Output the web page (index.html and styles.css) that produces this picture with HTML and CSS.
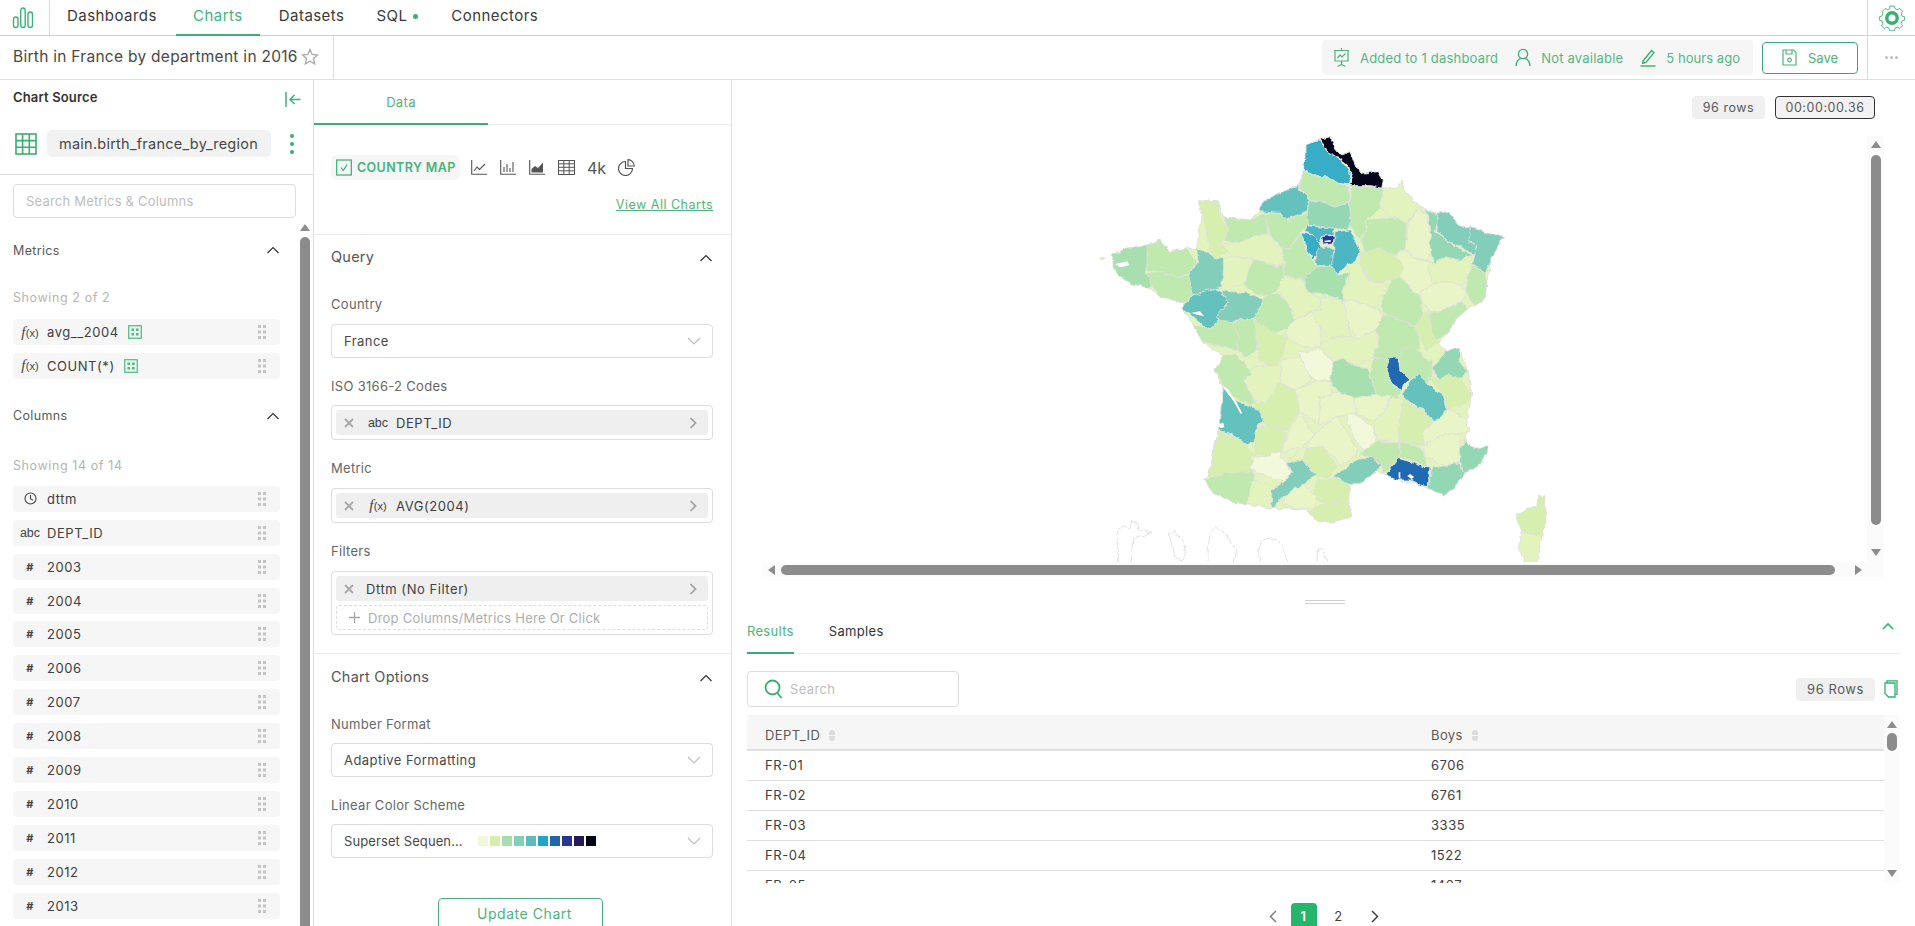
FILE: index.html
```html
<!DOCTYPE html>
<html lang="en">
<head>
<meta charset="utf-8">
<title>Birth in France by department in 2016</title>
<link rel="stylesheet" href="styles.css">
</head>
<body>
<svg class="defs" width="0" height="0" aria-hidden="true">
  <defs>
    <symbol id="grip" viewBox="0 0 10 14"><g fill="#c4c4c4"><rect x="1" y="0" width="3" height="3"/><rect x="6" y="0" width="3" height="3"/><rect x="1" y="5.5" width="3" height="3"/><rect x="6" y="5.5" width="3" height="3"/><rect x="1" y="11" width="3" height="3"/><rect x="6" y="11" width="3" height="3"/></g></symbol>
    <symbol id="up" viewBox="0 0 14 8"><path d="M1.5 7 7 1.5 12.500 7" fill="none" stroke="#333" stroke-width="1.200"/></symbol>
    <symbol id="down" viewBox="0 0 14 8"><path d="M1 1 7 7 13 1" fill="none" stroke="#bdbdbd" stroke-width="1.100"/></symbol>
    <symbol id="right" viewBox="0 0 8 12"><path d="M1.500 1 6.500 6 1.500 11" fill="none" stroke="#a0a0a0" stroke-width="1.700"/></symbol>
    <symbol id="x" viewBox="0 0 10 10"><path d="M1 1 9 9M9 1 1 9" fill="none" stroke="#a8a8a8" stroke-width="1.800"/></symbol>
    <symbol id="calc" viewBox="0 0 14 14"><rect x=".7" y=".7" width="12.600" height="12.600" fill="#e7f5ec" stroke="#53b985" stroke-width="1.200"/><g fill="#53b985"><rect x="3.500" y="3.500" width="2.500" height="2.500"/><rect x="8" y="3.500" width="2.500" height="2.500"/><rect x="3.500" y="8" width="2.500" height="2.500"/><rect x="8" y="8" width="2.500" height="2.500"/></g></symbol>
  </defs>
</svg>

<header class="nav">
  <div class="nav-logo">
    <svg width="22" height="22" viewBox="0 0 22 22"><g fill="none" stroke="#3fb27a" stroke-width="1.400"><rect x="1.500" y="10" width="4.500" height="10.500" rx="2.200"/><rect x="8.700" y="1" width="4.500" height="19.500" rx="2.200"/><rect x="16" y="5" width="4.500" height="15.500" rx="2.200"/></g></svg>
  </div>
  <nav class="nav-items">
    <a class="nav-item nav-dash">Dashboards</a>
    <a class="nav-item nav-charts">Charts</a>
    <a class="nav-item nav-data">Datasets</a>
    <a class="nav-item nav-sql">SQL <i class="nav-dot"></i></a>
    <a class="nav-item nav-conn">Connectors</a>
  </nav>
  <div class="nav-user">
    <svg width="26" height="26" viewBox="0 0 26 26"><path d="M10.500 1.500h5l.8 2.900 2.500 1.100 2.700-1.400 3 3.200-1.500 2.600 1 2.500 2.700.9v3.600l-2.800.9-1 2.500 1.500 2.600-3 3-2.600-1.400-2.500 1-.8 2.900h-5l-.8-2.900-2.500-1-2.600 1.400-3-3 1.400-2.600-1-2.500-2.800-.9v-3.600l2.800-.9 1-2.500L2.600 7.300l3-3.200 2.700 1.400 2.400-1.100z" transform="translate(13 13) scale(.92) translate(-13 -14.500)" fill="none" stroke="#3fb27a" stroke-width="1"/><circle cx="13" cy="13" r="5.200" fill="none" stroke="#37b071" stroke-width="3.400"/></svg>
  </div>
</header>

<section class="titlebar">
  <div class="title-cell">
    <span class="title-text">Birth in France by department in 2016</span>
    <svg width="18" height="18" viewBox="0 0 18 18"><path d="M9 1.500 11.200 6.500 16.500 7 12.500 10.600 13.700 16 9 13.200 4.300 16 5.500 10.600 1.500 7 6.800 6.500z" fill="none" stroke="#a9a9a9" stroke-width="1.300"/></svg>
  </div>
  <div class="title-actions">
    <div class="meta">
      <svg width="17" height="20" viewBox="0 0 17 20"><g fill="none" stroke="#4cb57a" stroke-width="1.200"><path d="M8.500 0v2M1 2.500h15M2 2.500v10.500h13V2.500M8.500 13v4M4.500 18.500l4-2 4 2"/><path d="M4.500 10 7 7l2 2 3.500-3.500"/></g></svg>
      <span class="meta-text meta-a">Added to 1 dashboard</span>
      <svg width="16" height="19" viewBox="0 0 16 19"><g fill="none" stroke="#37b071" stroke-width="1.400"><circle cx="8" cy="6" r="4.600"/><path d="M1 18c.4-4.500 2.800-7 5-7.600M15 18c-.4-4.500-2.800-7-5-7.600"/></g></svg>
      <span class="meta-text meta-b">Not available</span>
      <svg width="16" height="18" viewBox="0 0 16 18"><g fill="none" stroke="#37b071" stroke-width="1.400"><path d="M3 12 11.500 1.500 14 3.700 6 13.500 2.700 14.300z"/><path d="M.5 17h15"/></g></svg>
      <span class="meta-text meta-c">5 hours ago</span>
    </div>
    <button class="btn-save">
      <svg width="15" height="17" viewBox="0 0 15 17"><g fill="none" stroke="#4cb57a" stroke-width="1.200"><path d="M1 1h10.500L14 3.500V16H1z"/><path d="M4 1v4h6V1"/><circle cx="7.500" cy="11" r="1.800"/></g></svg>
      <span>Save</span>
    </button>
    <div class="more"><i></i><i></i><i></i></div>
  </div>
</section>

<main class="workspace">
  <aside class="source">
    <div class="source-head">
      <span class="source-title">Chart Source</span>
      <svg width="16" height="15" viewBox="0 0 16 15"><g fill="none" stroke="#3fb27a" stroke-width="1.500"><path d="M1 0v15M15.500 7.500H5M9.500 3 5 7.500l4.500 4.500"/></g></svg>
    </div>
    <div class="dataset">
      <svg class="dataset-icon" width="22" height="22" viewBox="0 0 22 22"><g fill="none" stroke="#37b071" stroke-width="1.600"><rect x="1" y="1" width="20" height="20"/><path d="M7.600 1v20M14.300 1v20M1 7.600h20M1 14.300h20"/></g></svg>
      <span class="dataset-name">main.birth_france_by_region</span>
      <span class="kebab"><i></i><i></i><i></i></span>
    </div>
    <div class="source-search"><span class="source-input">Search Metrics &amp; Columns</span></div>
    <div class="source-body">
      <div class="source-list">
        <div class="sec-head sec-metrics"><span>Metrics</span><svg width="14" height="8"><use href="#up"/></svg></div>
        <div class="showing showing-m">Showing 2 of 2</div>
        <div class="field"><span class="ftype"><em>f</em><small>(x)</small></span><span class="fname">avg__2004</span><svg class="calc" width="14" height="14"><use href="#calc"/></svg><svg class="grip" width="10" height="14"><use href="#grip"/></svg></div>
        <div class="field"><span class="ftype"><em>f</em><small>(x)</small></span><span class="fname">COUNT(*)</span><svg class="calc" width="14" height="14"><use href="#calc"/></svg><svg class="grip" width="10" height="14"><use href="#grip"/></svg></div>
        <div class="sec-head sec-cols"><span>Columns</span><svg width="14" height="8"><use href="#up"/></svg></div>
        <div class="showing showing-c">Showing 14 of 14</div>
        <div class="field"><span class="ftype"><svg width="13" height="13" viewBox="0 0 13 13"><g fill="none" stroke="#444" stroke-width="1.100"><circle cx="6.500" cy="6.500" r="5.500"/><path d="M6.500 3v3.700l2.400 1.500"/></g></svg></span><span class="fname">dttm</span><svg class="grip" width="10" height="14"><use href="#grip"/></svg></div>
        <div class="field"><span class="ftype ftype-s">abc</span><span class="fname">DEPT_ID</span><svg class="grip" width="10" height="14"><use href="#grip"/></svg></div>
        <div class="field"><span class="ftype ftype-h">#</span><span class="fname">2003</span><svg class="grip" width="10" height="14"><use href="#grip"/></svg></div>
        <div class="field"><span class="ftype ftype-h">#</span><span class="fname">2004</span><svg class="grip" width="10" height="14"><use href="#grip"/></svg></div>
        <div class="field"><span class="ftype ftype-h">#</span><span class="fname">2005</span><svg class="grip" width="10" height="14"><use href="#grip"/></svg></div>
        <div class="field"><span class="ftype ftype-h">#</span><span class="fname">2006</span><svg class="grip" width="10" height="14"><use href="#grip"/></svg></div>
        <div class="field"><span class="ftype ftype-h">#</span><span class="fname">2007</span><svg class="grip" width="10" height="14"><use href="#grip"/></svg></div>
        <div class="field"><span class="ftype ftype-h">#</span><span class="fname">2008</span><svg class="grip" width="10" height="14"><use href="#grip"/></svg></div>
        <div class="field"><span class="ftype ftype-h">#</span><span class="fname">2009</span><svg class="grip" width="10" height="14"><use href="#grip"/></svg></div>
        <div class="field"><span class="ftype ftype-h">#</span><span class="fname">2010</span><svg class="grip" width="10" height="14"><use href="#grip"/></svg></div>
        <div class="field"><span class="ftype ftype-h">#</span><span class="fname">2011</span><svg class="grip" width="10" height="14"><use href="#grip"/></svg></div>
        <div class="field"><span class="ftype ftype-h">#</span><span class="fname">2012</span><svg class="grip" width="10" height="14"><use href="#grip"/></svg></div>
        <div class="field"><span class="ftype ftype-h">#</span><span class="fname">2013</span><svg class="grip" width="10" height="14"><use href="#grip"/></svg></div>
      </div>
      <div class="vbar vbar-source"><i class="arr-up"></i><b class="thumb"></b></div>
    </div>
  </aside>

  <section class="controls">
    <div class="ctl-tabs"><span class="ctl-tab">Data</span></div>
    <div class="types">
      <div class="type-row">
        <span class="type-chip">
          <svg width="16" height="17" viewBox="0 0 16 17"><g fill="none" stroke="#37b071" stroke-width="1.200"><rect x=".7" y="1" width="14.600" height="15"/><path d="M5 8.500l2.300 3L11 5.500"/></g></svg>
          <span>COUNTRY MAP</span>
        </span>
        <svg class="type-ic" width="16" height="15" viewBox="0 0 16 15"><g fill="none" stroke="#555" stroke-width="1.100"><path d="M.7 0v14.300H16"/><path d="M3 11l3-4 2.500 2.500L14 4"/></g></svg>
        <svg class="type-ic" width="16" height="15" viewBox="0 0 16 15"><g fill="none" stroke="#555" stroke-width="1.100"><path d="M.7 0v14.300H16M4 12V7M7 12V4M10 12V8M13 12V2"/></g></svg>
        <svg class="type-ic" width="16" height="15" viewBox="0 0 16 15"><path d="M.7 0v14.300H16" fill="none" stroke="#555" stroke-width="1.100"/><path d="M2.500 12.500V9l3.500-3 3 2 5-5.500v10z" fill="#555"/></svg>
        <svg class="type-ic" width="17" height="15" viewBox="0 0 17 15"><g fill="none" stroke="#555" stroke-width="1"><rect x=".5" y=".5" width="16" height="14"/><path d="M.5 3.800h16M.5 7.300h16M.5 10.800h16M5.800.5v14M11.200.5v14"/></g></svg>
        <span class="type-4k">4k</span>
        <svg class="type-ic type-pie" width="17" height="17" viewBox="0 0 17 17"><g fill="none" stroke="#555" stroke-width="1.200"><path d="M7.500 2.500a7 7 0 1 0 7 7h-7z"/><path d="M10 .7a6.500 6.500 0 0 1 6.300 6.300H10z"/></g></svg>
      </div>
      <a class="view-all">View All Charts</a>
    </div>
    <div class="panel-sec sec-query">
      <div class="panel-head"><span>Query</span><svg width="14" height="8"><use href="#up"/></svg></div>
      <label class="ctl-label lb-country">Country</label>
      <div class="select"><span>France</span><svg width="14" height="8"><use href="#down"/></svg></div>
      <label class="ctl-label lb-iso">ISO 3166-2 Codes</label>
      <div class="dropbox">
        <div class="chip"><svg class="chip-x" width="10" height="10"><use href="#x"/></svg><span class="chip-t ftype-s">abc</span><span class="chip-n">DEPT_ID</span><svg class="chip-go" width="8" height="12"><use href="#right"/></svg></div>
      </div>
      <label class="ctl-label lb-metric">Metric</label>
      <div class="dropbox">
        <div class="chip"><svg class="chip-x" width="10" height="10"><use href="#x"/></svg><span class="chip-t"><em>f</em><small>(x)</small></span><span class="chip-n">AVG(2004)</span><svg class="chip-go" width="8" height="12"><use href="#right"/></svg></div>
      </div>
      <label class="ctl-label lb-filter">Filters</label>
      <div class="dropbox">
        <div class="chip chip-f"><svg class="chip-x" width="10" height="10"><use href="#x"/></svg><span class="chip-n">Dttm (No Filter)</span><svg class="chip-go" width="8" height="12"><use href="#right"/></svg></div>
        <div class="drop-hint"><svg width="11" height="11" viewBox="0 0 11 11"><path d="M5.500 0v11M0 5.500h11" stroke="#a8a8a8" stroke-width="1.300"/></svg><span>Drop Columns/Metrics Here Or Click</span></div>
      </div>
    </div>
    <div class="panel-sec sec-options">
      <div class="panel-head"><span>Chart Options</span><svg width="14" height="8"><use href="#up"/></svg></div>
      <label class="ctl-label lb-number">Number Format</label>
      <div class="select"><span>Adaptive Formatting</span><svg width="14" height="8"><use href="#down"/></svg></div>
      <label class="ctl-label lb-scheme">Linear Color Scheme</label>
      <div class="select">
        <span class="scheme-name">Superset Sequen...</span>
        <span class="swatches"><i class="s1"></i><i class="s2"></i><i class="s3"></i><i class="s4"></i><i class="s5"></i><i class="s6"></i><i class="s7"></i><i class="s8"></i><i class="s9"></i><i class="s10"></i></span>
        <svg width="14" height="8"><use href="#down"/></svg>
      </div>
    </div>
    <div class="update-row"><button class="btn-update">Update Chart</button></div>
  </section>

  <section class="viz">
    <div class="viz-badges"><span class="badge badge-count">96 rows</span><span class="badge badge-timer">00:00:00.36</span></div>
    <div class="map-frame">
      <div class="map-cell">
        <svg class="map" width="470" height="426" viewBox="0 48 1410 1278">
          <defs>
            <filter id="rough" x="-3%" y="-3%" width="106%" height="106%" color-interpolation-filters="sRGB">
              <feTurbulence type="fractalNoise" baseFrequency="0.05" numOctaves="3" seed="4" result="f"/>
              <feColorMatrix in="f" type="matrix" values="1 0 0 0 0  0 1 0 0 0  0 0 0 0 0  0 0 0 0 1" result="opaque"/>
              <feDisplacementMap in="SourceGraphic" in2="opaque" scale="14" xChannelSelector="R" yChannelSelector="G"/>
            </filter>
          </defs>
          <g class="dom" filter="url(#rough)">
            <path d="M83 1326v-93l20-15 15 12 8-30 14 6 4 22 40 10-20 12-14-2-22 10-5 78M237 1240l15-5 25 22 12 48-10 15-28-8-6-40zM355 1330c-3-60 2-90 20-110l30 20 35 50-8 40M510 1330c-8-40-5-70 25-75 30-5 55 30 55 75M680 1330l4-45 14 2 15 43"/>
          </g>
          <g class="fr" filter="url(#rough)">
            <polygon class="y1" points="645,75 690,58 722,50 735,85 752,105 780,95 795,135 810,160 865,155 880,205 920,205 932,180 945,215 985,255 1040,280 1075,275 1110,320 1140,320 1190,340 1240,348 1205,415 1190,490 1185,535 1155,557 1135,565 1095,600 1075,640 1045,665 1065,695 1105,685 1135,755 1145,825 1130,900 1135,930 1125,960 1150,985 1195,980 1170,1035 1125,1060 1090,1105 1060,1125 1015,1105 990,1095 920,1080 885,1065 860,1055 810,1090 780,1090 775,1135 785,1190 730,1205 680,1205 655,1175 620,1165 545,1165 470,1150 440,1150 370,1120 340,1080 355,1070 370,1000 385,930 390,890 400,805 375,750 400,705 340,670 310,615 275,565 285,550 215,530 180,505 120,490 90,470 70,440 68,405 172,375 210,360 240,395 290,385 320,385 335,275 322,243 385,242 400,292 480,300 510,275 515,250 560,222 625,197 640,150 645,110"/>
            <polygon class="t3" points="625,197 655,240 652,272 620,286 590,300 570,280 510,275 515,250 560,222"/>
            <polygon class="g2" points="640,152 680,170 715,172 745,190 775,197 778,243 735,260 700,245 655,240 628,195"/>
            <polygon class="t1" points="645,75 688,60 705,85 718,102 745,113 772,140 785,170 775,195 745,190 715,170 680,170 640,150 645,110"/>
            <polygon class="bk" points="690,58 722,50 735,85 752,105 780,95 795,135 810,160 865,155 880,180 875,205 840,197 782,197 790,170 775,145 770,130 745,112 715,100 705,80"/>
            <polygon class="g2" points="785,198 880,205 870,262 830,300 825,340 805,360 772,300 780,250"/>
            <polygon class="y1" points="880,205 920,205 932,180 945,215 985,255 955,305 905,290 870,262"/>
            <polygon class="m2" points="655,242 700,247 735,262 778,245 782,300 775,330 730,325 680,318 650,315"/>
            <polygon class="g2" points="570,282 590,302 620,287 652,278 655,315 630,335 605,380 575,385 540,340 525,280"/>
            <polygon class="g2" points="400,292 480,300 525,282 535,340 490,350 455,365 420,370 400,360 415,325"/>
            <polygon class="g3" points="322,243 385,242 385,265 395,300 418,325 405,345 395,370 425,385 380,415 360,400 352,330 335,275"/>
            <polygon class="y1" points="395,372 455,365 490,350 540,345 575,385 580,425 560,440 490,415 440,410 420,405"/>
            <polygon class="t2" points="735,335 780,330 812,395 795,425 755,450 745,462 720,450 730,400"/>
            <polygon class="t2" points="650,317 730,325 733,342 695,350 690,375 670,345 640,335"/>
            <polygon class="t1" points="632,338 670,345 695,378 668,418 650,385"/>
            <polygon class="t3" points="690,380 730,385 728,435 680,437 675,410"/>
            <polygon class="nv" points="695,350 733,345 730,372 700,375"/>
            <polygon class="g2" points="830,300 905,292 950,310 945,385 915,405 870,385 830,395 810,362 828,340"/>
            <polygon class="y2" points="985,260 1010,290 1020,330 1025,380 1015,420 980,415 945,385 955,310"/>
            <polygon class="m2" points="1000,270 1035,280 1045,300 1035,335 1080,368 1125,395 1145,405 1110,420 1065,410 1030,428 1020,385 1022,325 1015,290"/>
            <polygon class="m1" points="1040,280 1075,275 1110,320 1140,320 1145,345 1135,365 1160,375 1155,405 1120,385 1080,365 1040,335 1045,300"/>
            <polygon class="m1" points="1140,320 1160,325 1190,340 1240,348 1215,400 1205,415 1185,460 1147,430 1155,405 1160,375 1135,362 1140,345"/>
            <polygon class="g2" points="1147,435 1185,460 1190,490 1185,535 1155,557 1140,540 1125,505 1130,480"/>
            <polygon class="y1" points="1000,420 1030,430 1065,412 1110,422 1145,410 1147,432 1130,478 1115,498 1080,485 1025,487 1015,450"/>
            <polygon class="g3" points="810,398 830,395 870,385 915,405 940,440 930,470 880,485 855,490 830,470 812,430"/>
            <polygon class="y2" points="915,405 945,388 980,418 1015,425 1015,450 1030,490 990,515 990,530 950,490 930,470 940,440"/>
            <polygon class="y2" points="1030,490 1080,485 1115,500 1130,520 1115,545 1050,575 1020,578 990,530 990,515"/>
            <polygon class="g2" points="1020,580 1050,575 1115,545 1135,565 1095,600 1075,640 1040,660 1025,640 1020,610"/>
            <polygon class="g2" points="870,555 905,480 930,472 950,492 990,535 1000,578 975,620 905,590 880,580"/>
            <polygon class="g3" points="1000,578 1020,580 1025,640 1045,665 1010,690 985,645 975,620"/>
            <polygon class="y1" points="755,515 780,480 770,435 795,425 812,435 830,475 855,490 880,488 890,510 870,555 850,560 790,540 760,540"/>
            <polygon class="y2" points="760,545 790,542 850,562 880,582 860,630 800,655 775,620"/>
            <polygon class="g1" points="640,478 680,440 722,438 745,465 780,460 755,515 760,540 690,520 650,515"/>
            <polygon class="g2" points="605,382 632,340 650,390 668,420 680,440 640,478 580,468 585,425 575,385"/>
            <polygon class="g2" points="490,418 560,442 580,430 580,470 560,510 535,530 490,520 462,490 480,440"/>
            <polygon class="y1" points="400,415 440,410 490,416 478,445 462,490 415,510 390,505 400,450"/>
            <polygon class="m1" points="320,385 360,402 380,418 400,415 400,450 395,500 310,525 295,465 325,425"/>
            <polygon class="g2" points="172,375 210,360 240,395 290,385 320,425 295,460 260,470 210,455 170,450"/>
            <polygon class="g1" points="68,405 110,385 145,378 172,375 170,455 185,490 180,505 120,490 90,470 70,440"/>
            <polygon class="g2" points="165,458 210,455 260,470 295,465 310,525 285,550 215,530 190,505 180,480"/>
            <polygon class="t3" points="310,525 370,505 395,515 410,545 400,570 385,600 360,630 345,620 300,580 275,565"/>
            <polygon class="m1" points="395,513 465,518 518,535 505,575 490,595 440,600 395,610 382,590 412,550"/>
            <polygon class="g2" points="518,535 560,520 590,545 615,600 590,625 555,640 520,620 490,595 505,575"/>
            <polygon class="y1" points="560,510 580,470 640,480 650,515 690,530 695,560 660,575 615,600 590,545"/>
            <polygon class="y1" points="690,530 760,540 775,620 780,650 715,655 690,620 660,580 695,570"/>
            <polygon class="y2" points="615,600 660,578 690,620 695,680 640,680 590,655 590,625"/>
            <polygon class="g3" points="490,595 520,620 555,640 590,655 580,700 555,745 510,720 500,660"/>
            <polygon class="g2" points="425,605 490,595 500,650 500,690 470,710 440,690 445,650"/>
            <polygon class="g2" points="310,615 345,622 360,632 385,600 425,605 445,650 440,690 395,680 340,670"/>
            <polygon class="y3" points="628,698 690,688 730,725 722,782 680,782 640,750"/>
            <polygon class="y1" points="715,655 780,650 800,655 860,630 870,680 855,690 850,715 790,735 760,715 730,725 690,680"/>
            <polygon class="g2" points="860,630 880,585 905,592 975,622 985,645 990,690 925,715 895,715 850,715 855,690 870,680"/>
            <polygon class="g2" points="850,715 895,715 890,750 905,790 935,810 915,840 860,825 840,760"/>
            <polygon class="g1" points="730,725 760,715 790,735 835,750 860,825 790,835 745,815 722,782"/>
            <polygon class="b1" points="898,712 925,715 930,750 960,780 940,795 935,810 905,790 888,750"/>
            <polygon class="g2" points="940,685 975,682 1010,720 1030,720 1025,770 1015,790 985,765 960,780 930,750 930,715"/>
            <polygon class="m2" points="1065,695 1105,685 1115,735 1135,755 1110,775 1075,765 1045,780 1030,745"/>
            <polygon class="g3" points="1045,780 1075,765 1110,775 1145,825 1130,850 1075,865 1060,825 1015,770"/>
            <polygon class="t3" points="985,765 1015,790 1040,815 1060,825 1075,885 1030,910 1000,865 970,855 935,825 960,785"/>
            <polygon class="y2" points="575,720 630,710 665,780 620,810 570,790"/>
            <polygon class="y1" points="460,780 490,740 575,735 570,790 530,850 490,840"/>
            <polygon class="g2" points="400,705 440,705 485,760 460,780 495,845 480,855 430,830 405,800 375,750"/>
            <polygon class="g3" points="530,850 565,790 620,810 630,870 590,930 530,915 520,900 490,850"/>
            <polygon class="t3" points="400,805 435,840 470,855 500,865 520,900 500,920 490,970 465,970 420,940 385,930 390,890"/>
            <polygon class="g3" points="385,935 420,943 465,973 495,1005 480,1015 490,1055 400,1060 355,1070 370,1000"/>
            <polygon class="g3" points="500,925 530,915 590,935 575,990 570,1005 495,1005 490,965"/>
            <polygon class="y3" points="490,1015 570,995 605,1060 590,1085 545,1075 480,1045"/>
            <polygon class="g2" points="340,1080 400,1060 490,1055 490,1090 470,1150 440,1150 370,1120"/>
            <polygon class="y1" points="490,1080 545,1095 555,1130 545,1165 490,1155 470,1150"/>
            <polygon class="y2" points="615,810 680,782 722,785 725,825 690,830 690,910 630,875 620,830"/>
            <polygon class="y2" points="690,830 725,825 745,815 790,835 800,875 770,885 740,890 690,915"/>
            <polygon class="y2" points="595,935 630,880 670,945 640,980 590,1015 575,990"/>
            <polygon class="y1" points="575,995 640,980 590,1028 570,1010"/>
            <polygon class="y2" points="670,945 740,890 800,980 800,1005 755,1035 720,1000 700,980 650,985"/>
            <polygon class="g3" points="650,985 700,980 740,1040 720,1075 680,1065 640,1020"/>
            <polygon class="m1" points="590,1030 635,1018 680,1065 640,1090 590,1125 555,1150 555,1165 545,1165 545,1110 590,1080 605,1055"/>
            <polygon class="y3" points="770,885 800,885 850,920 860,980 820,990 790,950"/>
            <polygon class="y2" points="790,835 860,825 900,830 880,880 850,905 800,880"/>
            <polygon class="y1" points="905,830 940,835 925,965 860,960 850,905 880,880"/>
            <polygon class="g3" points="940,835 970,860 1000,870 1030,910 1000,930 1000,975 930,970 925,940"/>
            <polygon class="y2" points="1075,865 1130,900 1135,930 1110,940 1050,945 1005,975 995,940 1030,910"/>
            <polygon class="y2" points="1050,945 1110,945 1110,980 1120,1025 1060,1035 1010,1010 1000,980"/>
            <polygon class="m2" points="1125,960 1150,985 1195,980 1170,1035 1125,1060 1108,1025 1112,985"/>
            <polygon class="g2" points="930,970 990,980 1005,1005 1010,1040 960,1020 930,1010"/>
            <polygon class="m2" points="1025,1045 1105,1030 1125,1060 1090,1105 1060,1125 1015,1105"/>
            <polygon class="b1" points="885,1065 925,1015 960,1025 1000,1040 1020,1040 1015,1100 990,1095 960,1080 920,1080"/>
            <polygon class="g2" points="860,965 925,965 930,1010 880,1060 875,1035 845,1010 810,1005"/>
            <polygon class="m1" points="735,1065 760,1050 800,1020 845,1010 875,1035 860,1055 810,1090 780,1090 740,1090"/>
            <polygon class="g3" points="680,1080 740,1075 780,1090 775,1135 700,1150 670,1130"/>
            <polygon class="y2" points="590,1125 640,1090 680,1130 675,1165 620,1165 575,1150"/>
            <polygon class="g3" points="655,1175 705,1150 775,1140 785,1190 730,1205 680,1205"/>
            <polygon class="g3" points="1345,1125 1362,1130 1368,1210 1355,1250 1295,1235 1275,1185 1315,1165 1340,1160"/>
            <polygon class="y1" points="1292,1235 1355,1250 1340,1340 1310,1340 1285,1285"/>
            <polygon class="y1" points="30,412 44,410 42,418 32,418"/>
          </g>
          <g class="water">
            <polygon points="75,432 112,424 118,436 90,442"/>
            <polygon points="304,578 330,574 342,588 320,584"/>
            <polygon points="403,805 408,802 437,842 456,878 452,882 432,846"/>
            <polygon points="388,912 400,908 403,922 390,925"/>
            <polygon points="952,1068 960,1062 972,1070 965,1078"/>
            <polygon points="926,1057 931,1057 931,1076 926,1074"/>
            <polygon points="703,362 722,360 722,365 705,367"/>
          </g>
        </svg>
      </div>
      <div class="vbar vbar-map"><i class="arr-up"></i><b class="thumb"></b><i class="arr-down"></i></div>
      <div class="hbar"><i class="arr-left"></i><b class="thumb"></b><i class="arr-right"></i></div>
    </div>
    <div class="splitter"></div>
    <div class="res-tabs">
      <span class="res-tab res-active">Results</span>
      <span class="res-tab res-samples">Samples</span>
      <svg class="res-caret" width="14" height="8" viewBox="0 0 14 8"><path d="M2 7 7 2l5 5" fill="none" stroke="#37b071" stroke-width="1.600"/></svg>
    </div>
    <div class="res-tools">
      <div class="res-search">
        <svg width="19" height="20" viewBox="0 0 19 20"><g fill="none" stroke="#37b071" stroke-width="1.800"><circle cx="8.500" cy="8.500" r="7"/><path d="M13.500 14l4 5"/></g></svg>
        <span>Search</span>
      </div>
      <span class="badge badge-rows">96 Rows</span>
      <svg class="copy-ic" width="14" height="18" viewBox="0 0 14 18"><g fill="none" stroke="#37b071" stroke-width="1.300"><path d="M3 3V.8h10v13.500h-2"/><path d="M1 3h10v14H4.500L1 13.500z"/></g></svg>
    </div>
    <div class="res-table">
      <div class="table-clip">
        <table>
          <thead>
            <tr><th class="col-a">DEPT_ID <i class="sort"></i></th><th>Boys <i class="sort"></i></th></tr>
          </thead>
          <tbody>
            <tr><td>FR-01</td><td>6706</td></tr>
            <tr><td>FR-02</td><td>6761</td></tr>
            <tr><td>FR-03</td><td>3335</td></tr>
            <tr><td>FR-04</td><td>1522</td></tr>
            <tr><td>FR-05</td><td>1407</td></tr>
          </tbody>
        </table>
      </div>
      <div class="vbar vbar-table"><i class="arr-up"></i><b class="thumb"></b><i class="arr-down"></i></div>
    </div>
    <div class="pager">
      <svg width="8" height="13" viewBox="0 0 8 13"><path d="M7 1 1.500 6.500 7 12" fill="none" stroke="#777" stroke-width="1.400"/></svg>
      <span class="page page-on">1</span>
      <span class="page page-two">2</span>
      <svg width="8" height="13" viewBox="0 0 8 13"><path d="M1 1l5.500 5.500L1 12" fill="none" stroke="#333" stroke-width="1.400"/></svg>
    </div>
  </section>
</main>
</body>
</html>
```

FILE: styles.css
```css
* { box-sizing: border-box; }
html, body { margin: 0; padding: 0; height: 926px; overflow: hidden; background: #fff; }
body { font-family: "Inter", "Liberation Sans", sans-serif; color: #484848; font-size: 13px; letter-spacing: .35px; }
.defs { display: block; height: 0; }
svg { flex: none; display: block; }
em { font-family: "Liberation Serif", serif; font-style: italic; font-size: 15px; }
small { font-family: "Liberation Sans", sans-serif; font-size: 11px; letter-spacing: 0; }

/* top nav */
.nav { display: flex; height: 36px; border-bottom: 1px solid #d2d2d2; }
.nav-logo { width: 50px; border-right: 1px solid #d9d9d9; display: flex; align-items: center; padding-left: 12px; }
.nav-items { display: flex; flex: 1; }
.nav-item { display: flex; align-items: center; height: 36px; padding-bottom: 4px; font-size: 15px; letter-spacing: .45px; color: #3a3a3a; gap: 6px; border-bottom: 2px solid transparent; }
.nav-dash { margin-left: 17px; }
.nav-charts { margin-left: 19px; width: 84px; justify-content: center; color: #44b37a; border-bottom-color: #37b071; }
.nav-data { margin-left: 19px; }
.nav-sql { margin-left: 32px; }
.nav-conn { margin-left: 33px; }
.nav-dot { width: 5px; height: 5px; margin-top: 2px; border-radius: 50%; background: #37b071; }
.nav-user { width: 48px; border-left: 1px solid #d9d9d9; display: flex; align-items: center; justify-content: center; }

/* title bar */
.titlebar { display: flex; height: 44px; border-bottom: 1px solid #dedede; }
.title-cell { width: 334px; border-right: 1px solid #dedede; display: flex; align-items: center; padding-left: 13px; gap: 3px; padding-bottom: 2px; }
.title-text { font-size: 15.500px; letter-spacing: .28px; color: #484848; white-space: nowrap; }
.title-actions { flex: 1; display: flex; justify-content: flex-end; align-items: center; }
.meta { display: flex; align-items: center; height: 35px; width: 431px; background: #f6f6f6; border-radius: 4px; padding-left: 11px; color: #4cb57a; }
.meta-text { font-size: 13px; letter-spacing: .2px; margin-left: 10px; white-space: nowrap; color: #55b883; }
.meta-a { margin-right: 17px; }
.meta-b { margin-right: 17px; }
.meta-c { letter-spacing: .05px; }
.btn-save { display: flex; align-items: center; justify-content: center; gap: 11px; width: 96px; height: 32px; margin-left: 9px; background: #fff; border: 1px solid #37a877; border-radius: 4px; color: #4cb57a; font: inherit; font-size: 13px; padding: 0; }
.more { width: 48px; height: 43px; margin-left: 9px; border-left: 1px solid #d9d9d9; display: flex; justify-content: center; align-items: center; gap: 2px; }
.more i { width: 3px; height: 3px; border-radius: 50%; background: #bdbdbd; }

/* layout */
.workspace { display: flex; height: 846px; }

/* source panel */
.source { width: 314px; border-right: 1px solid #e0e0e0; display: flex; flex-direction: column; flex: none; }
.source-head { display: flex; justify-content: space-between; padding: 9px 12px 0 13px; height: 50px; }
.source-title { font-size: 13px; letter-spacing: .15px; font-weight: 600; color: #333; }
.source-head svg { margin-top: 3px; }
.dataset { display: flex; align-items: center; height: 45px; border-bottom: 1px solid #dedede; padding-bottom: 17px; padding-left: 15px; }
.dataset-name { background: #f2f2f2; border-radius: 5px; width: 224px; height: 27px; margin-left: 10px; display: flex; align-items: center; padding-left: 12px; font-size: 14.500px; letter-spacing: .24px; white-space: nowrap; }
.kebab { margin-left: 19px; display: flex; flex-direction: column; gap: 4px; }
.kebab i { width: 4px; height: 4px; background: #37b071; border-radius: 50%; }
.source-search { padding: 9px 0 0 13px; height: 44px; }
.source-input { display: flex; align-items: center; width: 283px; height: 34px; padding-left: 12px; border: 1px solid #dcdcdc; border-radius: 4px; font-size: 13px; letter-spacing: .2px; color: #bdbdbd; }
.source-body { display: flex; flex: 1; overflow: hidden; }
.source-list { width: 300px; padding-left: 13px; flex: none; }
.sec-head { display: flex; align-items: center; justify-content: space-between; width: 267px; font-size: 12.500px; color: #5a5a5a; height: 20px; }
.sec-metrics { margin-top: 21px; }
.showing { font-size: 12.500px; color: #b5b5b5; height: 20px; display: flex; align-items: center; letter-spacing: .6px; }
.showing-m { margin-top: 27px; margin-bottom: 12px; }
.showing-c { margin-top: 30px; margin-bottom: 10px; }
.sec-cols { margin-top: 27px; }
.field { display: flex; align-items: center; width: 267px; height: 26px; margin-bottom: 7.900px; background: #f6f6f6; border-radius: 4px; font-size: 13px; color: #404040; }
.ftype { width: 34px; flex: none; display: flex; align-items: baseline; justify-content: center; color: #444; }
.ftype svg { align-self: center; }
.ftype-s { font-family: "Liberation Sans", sans-serif; font-size: 12.500px; letter-spacing: 0; }
.ftype-h { font-weight: 700; font-size: 11px; }
.fname { letter-spacing: .55px; white-space: nowrap; }
.calc { margin-left: 9px; }
.grip { margin-left: auto; margin-right: 13px; }

/* scrollbars */
.vbar { position: relative; display: flex; flex-direction: column; align-items: center; flex: none; }
.vbar .thumb { display: block; width: 10px; background: #8c8c8c; border-radius: 5px; }
.arr-up, .arr-down, .arr-left, .arr-right { display: block; width: 0; height: 0; flex: none; border-style: solid; border-color: transparent; }
.arr-up { border-width: 0 5px 7px; border-bottom-color: #8c8c8c; }
.arr-down { border-width: 7px 5px 0; border-top-color: #8c8c8c; }
.arr-left { border-width: 5px 7px 5px 0; border-right-color: #8c8c8c; }
.arr-right { border-width: 5px 0 5px 7px; border-left-color: #8c8c8c; }
.vbar-source { width: 10px; margin-right: 3px; padding-top: 5px; }
.vbar-source .thumb { flex: 1; margin-top: 6px; border-radius: 5px 5px 0 0; }

/* controls panel */
.controls { width: 418px; flex: none; border-right: 1px solid #e0e0e0; }
.ctl-tabs { height: 45px; border-bottom: 1px solid #ececec; }
.ctl-tab { display: flex; align-items: center; justify-content: center; width: 174px; height: 45px; border-bottom: 2px solid #3fa873; color: #4fb47f; font-size: 13px; }
.types { height: 110px; border-bottom: 1px solid #ececec; padding: 30px 18px 0 17px; }
.type-row { display: flex; align-items: center; height: 25px; }
.type-chip { display: flex; align-items: center; width: 129px; height: 25px; background: #f6f6f6; border-radius: 6px; padding-left: 5px; gap: 5px; color: #45b47a; font-size: 12.500px; font-weight: 600; letter-spacing: .4px; white-space: nowrap; }
.type-ic { margin-left: 13px; }
.type-chip + .type-ic { margin-left: 11px; }
.type-pie { margin-left: 12px; }
.type-4k { margin-left: 12px; font-size: 16px; color: #555; letter-spacing: 0; }
.view-all { display: block; text-align: right; margin-top: 17px; color: #4cb57a; text-decoration: underline; font-size: 12.500px; letter-spacing: .5px; }
.panel-sec { padding: 0 18px 0 17px; border-bottom: 1px solid #ececec; }
.panel-head { display: flex; justify-content: space-between; align-items: center; font-size: 14.500px; color: #555; letter-spacing: .25px; height: 22px; }
.panel-head svg { margin-top: 3px; }
.sec-query { height: 419px; padding-top: 10px; }
.sec-options { height: 244px; padding-top: 11px; border-bottom: 0; }
.ctl-label { display: block; height: 18px; line-height: 18px; font-size: 13px; color: #666; letter-spacing: .3px; }
.lb-country { margin-top: 28px; margin-bottom: 11px; }
.lb-iso { margin-top: 19px; margin-bottom: 10px; }
.lb-metric { margin-top: 19px; margin-bottom: 11px; }
.lb-filter { margin-top: 19px; margin-bottom: 11px; }
.lb-number { margin-top: 28px; margin-bottom: 10px; }
.lb-scheme { margin-top: 19px; margin-bottom: 10px; }
.select { display: flex; align-items: center; height: 34px; border: 1px solid #dcdcdc; border-radius: 4px; padding: 0 11px 1px 12px; font-size: 13px; color: #484848; letter-spacing: .45px; }
.select > svg { margin-left: auto; margin-top: 1px; }
.scheme-name { width: 122px; flex: none; letter-spacing: .1px; white-space: nowrap; }
.swatches { display: flex; gap: 2px; margin-left: 12px; }
.swatches i { width: 10px; height: 10px; display: block; }
.s1 { background: #f1f8d6; } .s2 { background: #d7eeac; } .s3 { background: #a8deaf; } .s4 { background: #84cebb; } .s5 { background: #5cbdbc; }
.s6 { background: #1fa6c8; } .s7 { background: #2165ab; } .s8 { background: #283593; } .s9 { background: #241a5c; } .s10 { background: #050518; }
.dropbox { border: 1px solid #dcdcdc; border-radius: 4px; padding: 4px; }
.chip { display: flex; align-items: center; height: 25px; background: #efefef; border-radius: 3px; padding: 0 11px 0 8px; font-size: 13px; color: #404040; }
.chip-t { width: 36px; margin-left: 6px; text-align: center; flex: none; }
.chip-n { letter-spacing: .55px; white-space: nowrap; }
.chip-f .chip-n { margin-left: 12px; }
.chip-go { margin-left: auto; }
.drop-hint { display: flex; align-items: center; height: 25px; margin-top: 4px; border: 1px dashed #dcdcdc; border-radius: 3px; padding-left: 12px; gap: 8px; color: #adadad; font-size: 13px; letter-spacing: .25px; white-space: nowrap; }
.update-row { display: flex; justify-content: center; }
.btn-update { width: 165px; height: 40px; background: #fff; border: 1px solid #47b17e; border-radius: 4px; color: #4cb57a; font: inherit; font-size: 14px; letter-spacing: .55px; margin-left: -4px; padding: 0 0 10px 8px; }

/* viz */
.viz { flex: 1; min-width: 0; padding-left: 15px; display: flex; flex-direction: column; }
.viz > * { flex: none; }
.viz-badges { display: flex; justify-content: flex-end; gap: 10px; padding: 16px 40px 0 0; height: 56px; }
.badge { display: flex; align-items: center; justify-content: center; height: 23px; padding: 0; background: #f0f0f0; border-radius: 4px; font-size: 12.500px; color: #5a5a5a; letter-spacing: .55px; }
.badge-count { width: 73px; }
.badge-timer { width: 100px; border: 1px solid #333; background: #f2f2f2; }
.map-frame { display: grid; grid-template-columns: 1105px 17px; grid-template-rows: 426px 15px; margin-left: 15px; width: 1122px; }
.map-cell { overflow: hidden; }
.map { margin-left: 328px; }
.map polygon { stroke: #dedede; stroke-width: 2.500; stroke-linejoin: round; }
.dom path { fill: none; stroke: #dcdcdc; stroke-width: 2.500; }
.water polygon { fill: #fff; stroke: none; }
.bk { fill: #04041a; } .t1 { fill: #37aec6; } .t2 { fill: #4cb6c2; } .t3 { fill: #65c1bd; }
.m1 { fill: #82cebb; } .m2 { fill: #93d7b4; } .g1 { fill: #a8dfae; } .g2 { fill: #bfe9ae; } .g3 { fill: #d6efae; }
.y1 { fill: #e2f3bd; } .y2 { fill: #e9f5c6; } .y3 { fill: #f2f9da; } .b1 { fill: #1f6ab1; } .nv { fill: #283593; }
.fr .bk, .fr .b1, .fr .nv, .fr .t1 { stroke: #f0f0f0; }
.vbar-map { grid-column: 2; grid-row: 1; background: #fbfbfb; padding: 5px 0 6px; }
.vbar-map .thumb { flex: 1; margin: 7px 0 24px; }
.hbar { grid-column: 1 / span 2; grid-row: 2; display: flex; align-items: center; background: #fbfbfb; padding: 0 22px 0 6px; }
.hbar .thumb { display: block; flex: 1; height: 10px; background: #8c8c8c; border-radius: 5px; margin: 0 20px 0 6px; }
.splitter { width: 40px; height: 4px; margin: 23px 0 0 558px; border-top: 1px solid #cfcfcf; border-bottom: 1px solid #cfcfcf; }
.res-tabs { position: relative; display: flex; height: 50px; border-bottom: 1px solid #ececec; width: 1153px; }
.res-tab { display: flex; align-items: center; height: 50px; padding-top: 6px; font-size: 13px; color: #333; letter-spacing: .3px; border-bottom: 2px solid transparent; }
.res-samples { margin-left: 35px; letter-spacing: .35px; }
.res-active { color: #4cb57a; border-bottom-color: #3fa873; }
.res-caret { position: absolute; right: 5px; top: 18px; }
.res-tools { display: flex; align-items: center; margin-top: 17px; height: 36px; width: 1153px; }
.res-search { display: flex; align-items: center; gap: 7px; width: 212px; height: 36px; padding-left: 16px; border: 1px solid #dcdcdc; border-radius: 4px; color: #bdbdbd; font-size: 13px; }
.badge-rows { width: 79px; margin-left: auto; font-size: 13px; }
.copy-ic { margin: 0 2px 0 9px; }
.res-table { display: flex; margin-top: 8px; height: 168px; width: 1153px; }
.table-clip { width: 1137px; height: 168px; overflow: hidden; flex: none; }
table { border-collapse: collapse; width: 100%; table-layout: fixed; font-size: 13px; }
th { height: 35px; background: #f6f6f6; border-bottom: 2px solid #e0e0e0; text-align: left; font-weight: 400; color: #5a5a5a; padding: 5px 0 0 17px; letter-spacing: .4px; }
th.col-a { width: 667px; padding-left: 18px; }
td { height: 30px; border-bottom: 1px solid #e0e0e0; padding: 0 0 0 17px; color: #404040; letter-spacing: .55px; }
td:first-child { padding-left: 18px; }
.sort { display: inline-block; width: 6px; height: 11px; margin-left: 5px; vertical-align: -1px; background: linear-gradient(#dcdcdc 0 45%, transparent 45% 55%, #dcdcdc 55%); border-radius: 3px; }
.vbar-table { width: 16px; background: #fbfbfb; padding: 6px 0; }
.vbar-table .thumb { height: 18px; margin-top: 5px; margin-bottom: auto; }
.pager { display: flex; align-items: center; justify-content: center; height: 40px; padding-top: 20px; margin-top: 3px; width: 1153px; }
.pager > svg:first-child { margin-right: 14px; }
.page { display: flex; align-items: center; justify-content: center; width: 26px; height: 26px; margin-right: 8px; font-size: 13px; border-radius: 4px; color: #404040; }
.page-on { background: #25b56b; color: #fff; font-weight: 600; }
.page-two { margin-right: 9px; margin-left: 1px; }
.pager > svg:last-child { margin-left: 10px; }
```
